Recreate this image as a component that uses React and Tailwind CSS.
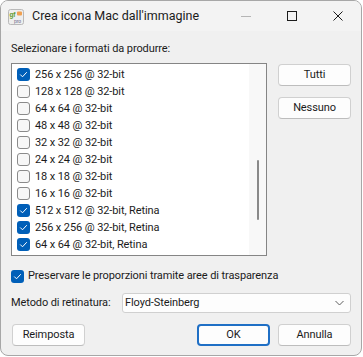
import React from 'react';

const FONT = "font-['Roboto','Segoe_UI',sans-serif] tracking-[-0.1px]";

const formats = [
  { label: '256 x 256 @ 32-bit', checked: true },
  { label: '128 x 128 @ 32-bit', checked: false },
  { label: '64 x 64 @ 32-bit', checked: false },
  { label: '48 x 48 @ 32-bit', checked: false },
  { label: '32 x 32 @ 32-bit', checked: false },
  { label: '24 x 24 @ 32-bit', checked: false },
  { label: '18 x 18 @ 32-bit', checked: false },
  { label: '16 x 16 @ 32-bit', checked: false },
  { label: '512 x 512 @ 32-bit, Retina', checked: true },
  { label: '256 x 256 @ 32-bit, Retina', checked: true },
  { label: '64 x 64 @ 32-bit, Retina', checked: true },
];

function CheckBox({ checked }) {
  if (checked) {
    return (
      <span className="flex h-[13px] w-[13px] shrink-0 items-center justify-center rounded-[3px] bg-[#005fb8]">
        <svg width="9" height="9" viewBox="0 0 9 9" fill="none">
          <path d="M1.5 4.8l2 2 4-4.3" stroke="#ffffff" strokeWidth="1" strokeLinecap="round" strokeLinejoin="round" />
        </svg>
      </span>
    );
  }
  return <span className="h-[13px] w-[13px] shrink-0 rounded-[3px] border border-[#8b8b8b] bg-[#f7f7f7]" />;
}

function Button({ children, primary, className = '' }) {
  return (
    <button
      type="button"
      className={`flex h-[22px] w-[73px] items-center justify-center rounded-[4px] bg-[#fdfdfd] text-[11px] text-[#1b1b1b] ${
        primary ? 'border-2 border-[#1f6fc5]' : 'border border-[#d0d0d0] border-b-[#bdbdbd]'
      } ${className}`}
    >
      {children}
    </button>
  );
}

function AppIcon() {
  return (
    <svg width="16" height="16" viewBox="0 0 16 16">
      <rect x="0.5" y="0.5" width="15" height="15" rx="2" fill="#eeeeee" stroke="#b9b9b9" />
      <text x="1.5" y="7.5" fontSize="6.5" fontFamily="Liberation Sans, sans-serif" fontWeight="700" fill="#5c9a2c">gf</text>
      <rect x="9" y="2.5" width="5" height="4" rx="1" fill="#f0a050" />
      <text x="6" y="13.5" fontSize="5" fontFamily="Liberation Sans, sans-serif" fill="#6a6a8a">pro</text>
    </svg>
  );
}

export default function App() {
  return (
    <div className={`h-[357px] w-[363px] bg-white ${FONT} text-[11px] text-[#1b1b1b]`}>
      <div className="flex h-[356px] w-[362px] flex-col overflow-hidden rounded-[8px] border border-[#a7a7a7] bg-[#f0f0f0]">
        {/* title bar */}
        <div className="flex h-[30px] shrink-0 items-center bg-[#f3f3f3]">
          <div className="ml-[7px] mt-[1px]">
            <AppIcon />
          </div>
          <span className="ml-[8px] mt-[1px] text-[12.5px] tracking-normal">Crea icona Mac dall'immagine</span>
          <div className="ml-auto flex h-full items-center">
            <div className="flex w-[46px] justify-center">
              <span className="mt-[1px] h-px w-[10px] bg-[#b5b5b5]" />
            </div>
            <div className="flex w-[46px] justify-center">
              <span className="h-[10px] w-[10px] border border-[#1b1b1b]" />
            </div>
            <div className="flex w-[46px] justify-center">
              <svg width="10" height="10" viewBox="0 0 10 10">
                <path d="M0.5 0.5l9 9M9.5 0.5l-9 9" stroke="#1b1b1b" strokeWidth="1" />
              </svg>
            </div>
          </div>
        </div>

        {/* client */}
        <div className="flex flex-col px-[10px]">
          <div className="mt-[10px] h-[16px] leading-[16px]">Selezionare i formati da produrre:</div>

          <div className="mt-[6px] flex">
            <div className="flex h-[193px] w-[256px] border border-[#858585] bg-white">
              <ul className="flex-1 pt-[2px]">
                {formats.map((f) => (
                  <li key={f.label} className="flex h-[17px] items-center pl-[5px]">
                    <CheckBox checked={f.checked} />
                    <span className="ml-[5px] leading-[17px]">{f.label}</span>
                  </li>
                ))}
              </ul>
              <div className="flex w-[17px] justify-center bg-[#f8f8f8]">
                <span className="mt-[96px] h-[60px] w-[2px] rounded-full bg-[#8a8a8a]" />
              </div>
            </div>
            <div className="ml-[11px] mt-[1px] flex flex-col gap-[11px]">
              <Button>Tutti</Button>
              <Button>Nessuno</Button>
            </div>
          </div>

          <div className="mt-[12px] flex h-[16px] items-center">
            <CheckBox checked />
            <span className="ml-[4px]">Preservare le proporzioni tramite aree di trasparenza</span>
          </div>

          <div className="mt-[9px] flex h-[20px] items-center">
            <span>Metodo di retinatura:</span>
            <div className="ml-auto flex h-[20px] w-[229px] items-center rounded-[3px] border border-[#d0d0d0] bg-[#fdfdfd] pl-[2px] pr-[6px]">
              <span>Floyd-Steinberg</span>
              <svg className="ml-auto" width="9" height="6" viewBox="0 0 9 6" fill="none">
                <path d="M0.5 1l4 4 4-4" stroke="#5f5f5f" strokeWidth="1" />
              </svg>
            </div>
          </div>

          <div className="mt-[11px] flex">
            <Button className="ml-[1px]">Reimposta</Button>
            <Button primary className="ml-auto">OK</Button>
            <Button className="ml-[8px]">Annulla</Button>
          </div>
        </div>
      </div>
    </div>
  );
}
